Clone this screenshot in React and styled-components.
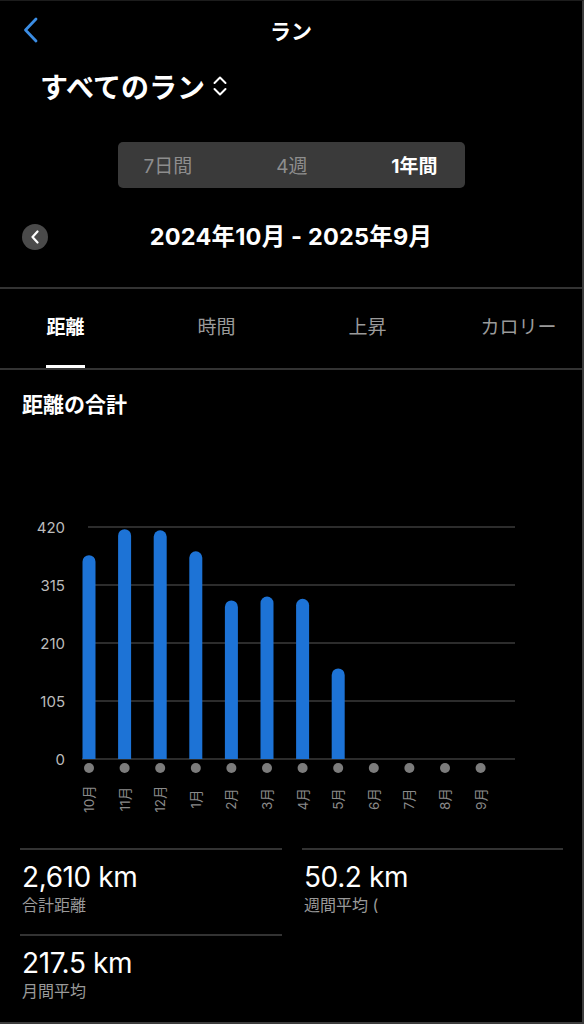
import React, { useState } from "react";
import styled, { createGlobalStyle } from "styled-components";

const GlobalStyle = createGlobalStyle`
  * { box-sizing: border-box; }
  body {
    margin: 0;
    background: #000;
    font-family: "Inter", "Noto Sans CJK JP", sans-serif;
    -webkit-font-smoothing: antialiased;
  }
`;

const monthly = [
  { label: "10月", value: 369 },
  { label: "11月", value: 416 },
  { label: "12月", value: 414 },
  { label: "1月", value: 376 },
  { label: "2月", value: 287 },
  { label: "3月", value: 294 },
  { label: "4月", value: 290 },
  { label: "5月", value: 164 },
  { label: "6月", value: 0 },
  { label: "7月", value: 0 },
  { label: "8月", value: 0 },
  { label: "9月", value: 0 },
];

const ranges = ["7日間", "4週", "1年間"];
const tabs = ["距離", "時間", "上昇", "カロリー"];

function Chart() {
  // chart coordinates are local to the svg
  const base = 319;
  const step = 58;
  const pxPerKm = (step * 4) / 420;
  const firstX = 89;
  const gap = 35.6;
  const ticks = [420, 315, 210, 105, 0];

  return (
    <ChartSvg width="584" height="390" viewBox="0 0 584 390">
      {ticks.map((t) => {
        const y = base - (t / 105) * step;
        const x1 = t === 420 ? 88 : t === 0 ? 82 : 95;
        return (
          <g key={t}>
            <line x1={x1} x2={515} y1={y} y2={y} stroke="#3b3b3b" strokeWidth="1.5" />
            <text
              x="65"
              y={y}
              textAnchor="end"
              dominantBaseline="central"
              fill="#bcbcbc"
              fontSize="15"
              fontFamily="Inter, sans-serif"
            >
              {t}
            </text>
          </g>
        );
      })}
      {monthly.map((m, i) => {
        const cx = firstX + i * gap;
        const h = m.value * pxPerKm;
        return (
          <g key={m.label}>
            {h > 0 && (
              <path
                d={`M${cx - 6.5} ${base} V${base - h + 6.5} A6.5 6.5 0 0 1 ${cx + 6.5} ${base - h + 6.5} V${base} Z`}
                fill="#1d73d6"
              />
            )}
            <circle cx={cx} cy={base + 9} r="5" fill="#7c7c7c" />
            <text
              x={cx}
              y={359}
              transform={`rotate(-90 ${cx} 359)`}
              textAnchor="middle"
              dominantBaseline="central"
              fill="#8a8a8a"
              fontSize="13.5"
              fontFamily="Inter, 'Noto Sans CJK JP', sans-serif"
            >
              {m.label}
            </text>
          </g>
        );
      })}
    </ChartSvg>
  );
}

export default function App() {
  const [range, setRange] = useState(2);
  const [tab, setTab] = useState(0);

  return (
    <>
      <GlobalStyle />
      <Screen>
        <NavBar>
          <BackButton aria-label="戻る">
            <svg width="18" height="26" viewBox="0 0 18 26">
              <path d="M14 2 L3.5 13 L14 24" fill="none" stroke="#3b8de4" strokeWidth="2.8" strokeLinecap="round" strokeLinejoin="round" />
            </svg>
          </BackButton>
          <NavTitle>ラン</NavTitle>
          <span />
        </NavBar>

        <FilterTitle>
          すべてのラン
          <svg width="16" height="22" viewBox="0 0 16 22">
            <path d="M2.5 8 L8 2.5 L13.5 8" fill="none" stroke="#fff" strokeWidth="2" strokeLinecap="round" strokeLinejoin="round" />
            <path d="M2.5 14 L8 19.5 L13.5 14" fill="none" stroke="#fff" strokeWidth="2" strokeLinecap="round" strokeLinejoin="round" />
          </svg>
        </FilterTitle>

        <Segmented>
          {ranges.map((r, i) => (
            <Segment key={r} $active={i === range} onClick={() => setRange(i)}>
              {r}
            </Segment>
          ))}
        </Segmented>

        <DateRow>
          <CircleButton aria-label="前へ">
            <svg width="10" height="14" viewBox="0 0 10 14">
              <path d="M7.5 1.5 L2.5 7 L7.5 12.5" fill="none" stroke="#fff" strokeWidth="2.2" strokeLinecap="round" strokeLinejoin="round" />
            </svg>
          </CircleButton>
          <DateText>2024年10月 - 2025年9月</DateText>
          <span />
        </DateRow>

        <Divider $top={25} />

        <TabBar>
          {tabs.map((t, i) => (
            <Tab key={t} $active={i === tab} onClick={() => setTab(i)}>
              <TabLabel $active={i === tab}>{t}</TabLabel>
            </Tab>
          ))}
        </TabBar>

        <Divider $top={0} />

        <SectionTitle>距離の合計</SectionTitle>

        <Chart />

        <Stats>
          <Stat>
            <StatValue>2,610 km</StatValue>
            <StatLabel>合計距離</StatLabel>
          </Stat>
          <Stat>
            <StatValue>50.2 km</StatValue>
            <StatLabel>週間平均 (</StatLabel>
          </Stat>
          <Stat>
            <StatValue>217.5 km</StatValue>
            <StatLabel>月間平均</StatLabel>
          </Stat>
        </Stats>
      </Screen>
    </>
  );
}

const Screen = styled.div`
  width: 584px;
  min-height: 1024px;
  background: #000;
  color: #fff;
  border-top: 1px solid #1c1c1c;
  border-right: 2px solid #3c3c3c;
  border-bottom: 2px solid #3c3c3c;
  overflow: hidden;
`;

const NavBar = styled.div`
  display: grid;
  grid-template-columns: 80px 1fr 80px;
  align-items: center;
  height: 57px;
`;

const BackButton = styled.button`
  background: none;
  border: none;
  padding: 0 0 0 22px;
  display: flex;
  align-items: center;
  height: 100%;
  cursor: pointer;
`;

const NavTitle = styled.div`
  text-align: center;
  font-size: 21px;
  font-weight: 600;
`;

const FilterTitle = styled.div`
  display: flex;
  align-items: center;
  gap: 7px;
  height: 56px;
  padding: 0 0 0 40px;
  font-size: 28px;
  font-weight: 700;
`;

const Segmented = styled.div`
  display: flex;
  justify-content: space-between;
  align-items: center;
  width: 347px;
  height: 46px;
  margin: 28px auto 0;
  padding: 0 27px 2px 26px;
  background: #3a3a3a;
  border-radius: 5px;
`;

const Segment = styled.div`
  font-size: 19px;
  font-weight: ${(p) => (p.$active ? 700 : 400)};
  color: ${(p) => (p.$active ? "#fff" : "#8e8e8e")};
  cursor: pointer;
`;

const DateRow = styled.div`
  display: grid;
  grid-template-columns: 1fr auto 1fr;
  align-items: center;
  height: 50px;
  margin-top: 24px;
  padding: 0 22px 4px;
`;

const CircleButton = styled.button`
  width: 26px;
  height: 26px;
  margin-top: 4px;
  border-radius: 50%;
  border: none;
  background: #4a4a4a;
  display: flex;
  align-items: center;
  justify-content: center;
  padding: 0;
  cursor: pointer;
`;

const DateText = styled.div`
  font-size: 23.5px;
  font-weight: 700;
  letter-spacing: 0.2px;
`;

const Divider = styled.div`
  height: 2px;
  margin-top: ${(p) => p.$top}px;
  background: #333;
`;

const TabBar = styled.div`
  display: grid;
  grid-template-columns: repeat(4, 151px);
  margin-left: -10px;
  height: 79px;
`;

const Tab = styled.div`
  display: flex;
  justify-content: center;
  cursor: pointer;
`;

const TabLabel = styled.div`
  display: flex;
  align-items: center;
  height: 100%;
  padding-bottom: 3px;
  font-size: 19px;
  font-weight: ${(p) => (p.$active ? 600 : 400)};
  color: ${(p) => (p.$active ? "#fff" : "#9a9a9a")};
  border-bottom: 3px solid ${(p) => (p.$active ? "#fff" : "transparent")};
`;

const SectionTitle = styled.div`
  margin-top: 22px;
  padding-left: 22px;
  line-height: 26px;
  font-size: 21px;
  font-weight: 700;
`;

const ChartSvg = styled.svg`
  display: block;
  margin-top: 22px;
`;

const Stats = styled.div`
  display: grid;
  grid-template-columns: 262px 261px;
  column-gap: 20px;
  margin-top: 18px;
  padding-left: 20px;
`;

const Stat = styled.div`
  height: 86px;
  border-top: 2px solid #333;
  padding: 11px 0 0 2px;
`;

const StatValue = styled.div`
  font-size: 28px;
  line-height: 32px;
  font-weight: 400;
  letter-spacing: -0.4px;
`;

const StatLabel = styled.div`
  margin-top: 2px;
  font-size: 16px;
  line-height: 20px;
  color: #9a9a9a;
`;
